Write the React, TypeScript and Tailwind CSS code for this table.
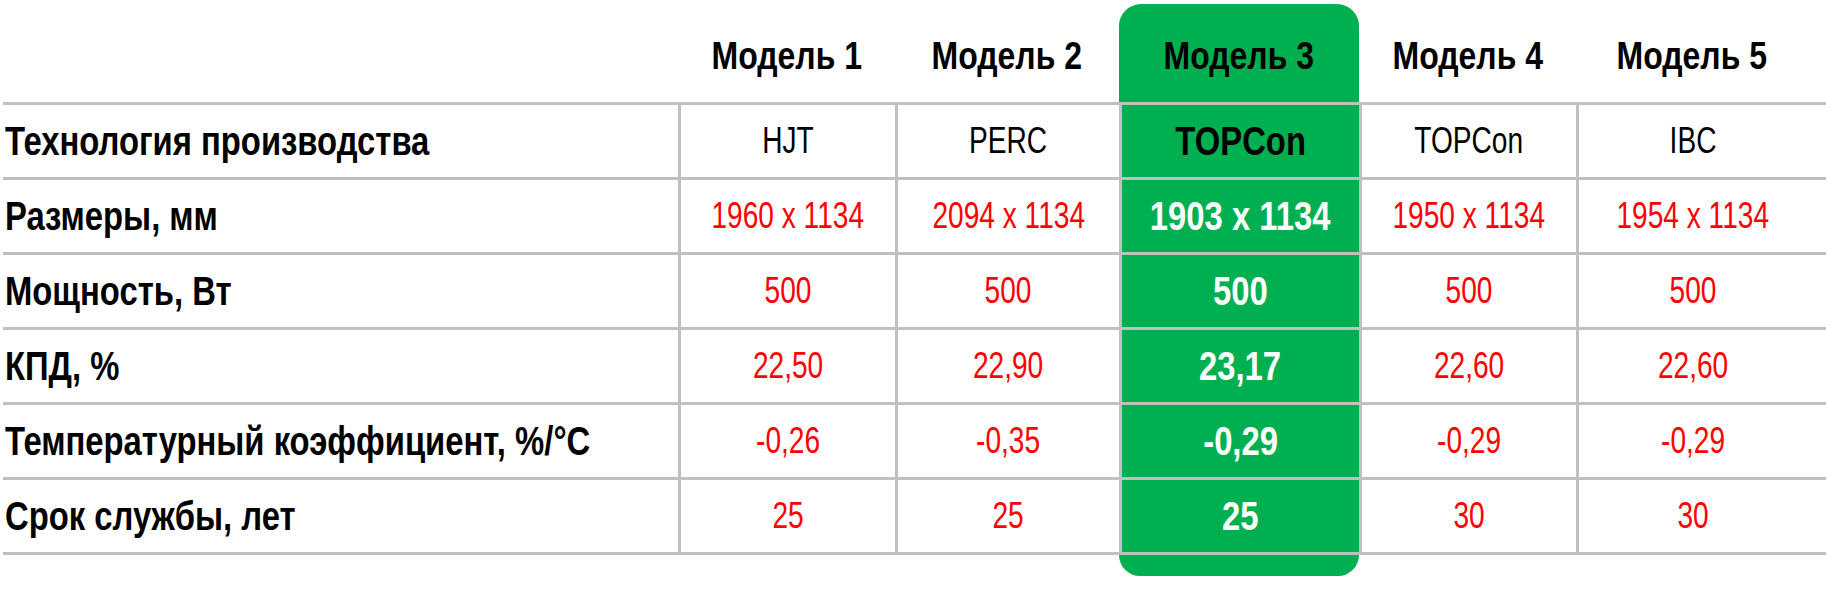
const models = ["Модель 1", "Модель 2", "Модель 3", "Модель 4", "Модель 5"];

type Row = { label: string; values: string[]; red: boolean };

const rows: Row[] = [
  { label: "Технология производства", values: ["HJT", "PERC", "TOPCon", "TOPCon", "IBC"], red: false },
  { label: "Размеры, мм", values: ["1960 x 1134", "2094 x 1134", "1903 x 1134", "1950 x 1134", "1954 x 1134"], red: true },
  { label: "Мощность, Вт", values: ["500", "500", "500", "500", "500"], red: true },
  { label: "КПД, %", values: ["22,50", "22,90", "23,17", "22,60", "22,60"], red: true },
  { label: "Температурный коэффициент, %/°C", values: ["-0,26", "-0,35", "-0,29", "-0,29", "-0,29"], red: true },
  { label: "Срок службы, лет", values: ["25", "25", "25", "30", "30"], red: true },
];

const cols = "grid grid-cols-[675px_217px_224px_240px_217px_231px]";

// Arial Narrow look: Liberation Sans squeezed horizontally
const narrow = "inline-block whitespace-nowrap";

export default function App() {
  return (
    <div className="w-[1826px] h-[590px] bg-white font-['Liberation_Sans',Arial,sans-serif] pt-[4px] pl-[3px]">
      {/* header */}
      <div className={`${cols} h-[98px]`}>
        <div />
        {models.map((m, i) => (
          <div
            key={m}
            className={`flex items-center justify-center pt-[6px] text-[39px] font-bold text-black ${
              i === 2 ? "bg-[#00b050] rounded-t-[22px]" : ""
            }`}
          >
            <span className={`${narrow} scale-x-[0.82] origin-center`}>{m}</span>
          </div>
        ))}
      </div>

      {/* body */}
      {rows.map((r, ri) => (
        <div
          key={r.label}
          className={`${cols} border-t-[3px] border-[#c0c0c0] ${
            ri === rows.length - 1 ? "h-[78px] border-b-[3px]" : "h-[75px]"
          }`}
        >
          <div className="flex items-center pl-[2px] text-[40px] font-bold text-black">
            <span className={`${narrow} scale-x-[0.82] origin-left`}>{r.label}</span>
          </div>
          {r.values.map((v, i) => {
            const green = i === 2;
            let color = r.red ? "text-[#ff0000]" : "text-black";
            if (green) color = ri === 0 ? "text-black" : "text-white";
            return (
              <div
                key={i}
                className={`flex items-center justify-center border-l-[3px] border-[#c0c0c0] ${
                  green ? "bg-[#00b050] font-bold text-[40px]" : "text-[36px]"
                } ${color}`}
              >
                <span className={`${narrow} origin-center ${green ? "scale-x-[0.82]" : "scale-x-[0.78]"}`}>{v}</span>
              </div>
            );
          })}
        </div>
      ))}

      {/* green column foot */}
      <div className={cols}>
        <div />
        <div />
        <div />
        <div className="h-[21px] bg-[#00b050] rounded-b-[22px]" />
      </div>
    </div>
  );
}
